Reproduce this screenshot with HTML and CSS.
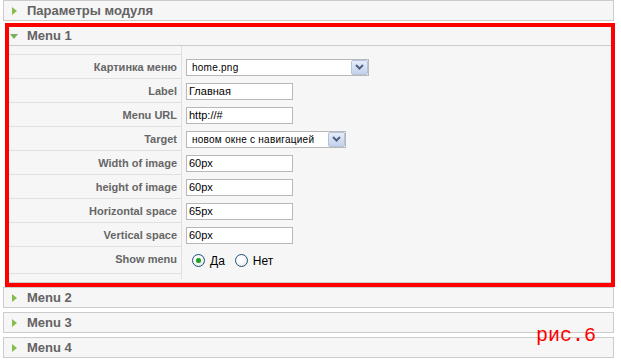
FILE: index.html
```html
<!DOCTYPE html>
<html lang="ru">
<head>
    <meta charset="UTF-8">
    <meta name="viewport" content="width=device-width, initial-scale=1.0">
    <title>Параметры модуля</title>
    <link rel="stylesheet" href="styles.css">
</head>
<body>
    <div class="params">
        <div class="panel">
            <h3 class="panel__title">Параметры модуля</h3>
        </div>

        <div class="panel panel--open">
            <h3 class="panel__title">Menu 1</h3>
            <div class="paramlist">
                <div class="paramlist__key paramlist__key--gap"></div>
                <div></div>

                <div class="paramlist__key">Картинка меню</div>
                <div class="paramlist__value">
                    <div class="select select--wide">
                        <span class="select__text">home.png</span>
                        <span class="select__arrow">
                            <svg width="9" height="6" viewBox="0 0 9 6"><path d="M1 1l3.5 3.5L8 1" fill="none" stroke="#4d6185" stroke-width="2"/></svg>
                        </span>
                    </div>
                </div>

                <div class="paramlist__key">Label</div>
                <div class="paramlist__value"><input class="text" type="text" value="Главная"></div>

                <div class="paramlist__key">Menu URL</div>
                <div class="paramlist__value"><input class="text" type="text" value="http://#"></div>

                <div class="paramlist__key">Target</div>
                <div class="paramlist__value">
                    <div class="select">
                        <span class="select__text">новом окне с навигацией</span>
                        <span class="select__arrow">
                            <svg width="9" height="6" viewBox="0 0 9 6"><path d="M1 1l3.5 3.5L8 1" fill="none" stroke="#4d6185" stroke-width="2"/></svg>
                        </span>
                    </div>
                </div>

                <div class="paramlist__key">Width of image</div>
                <div class="paramlist__value"><input class="text" type="text" value="60px"></div>

                <div class="paramlist__key">height of image</div>
                <div class="paramlist__value"><input class="text" type="text" value="60px"></div>

                <div class="paramlist__key">Horizontal space</div>
                <div class="paramlist__value"><input class="text" type="text" value="65px"></div>

                <div class="paramlist__key">Vertical space</div>
                <div class="paramlist__value"><input class="text" type="text" value="60px"></div>

                <div class="paramlist__key paramlist__key--tall">Show menu</div>
                <div class="paramlist__value">
                    <div class="radios">
                        <span class="radio radio--checked"></span>
                        <span class="radios__label">Да</span>
                        <span class="radio"></span>
                        <span class="radios__label">Нет</span>
                    </div>
                </div>

                <div class="paramlist__key paramlist__key--end"></div>
                <div></div>
            </div>
        </div>

        <div class="panel">
            <h3 class="panel__title">Menu 2</h3>
        </div>
        <div class="panel">
            <h3 class="panel__title">Menu 3</h3>
        </div>
        <div class="panel">
            <h3 class="panel__title">Menu 4</h3>
        </div>

        <!-- annotation drawn over the screenshot -->
        <div class="mark"></div>
        <span class="note">рис.6</span>
    </div>
</body>
</html>
```

FILE: styles.css
```css
* {
    margin: 0;
    padding: 0;
    box-sizing: border-box;
}
body {
    background: #ffffff;
    font-family: "Liberation Sans", Arial, sans-serif;
    color: #666666;
}
.params {
    position: relative;
    width: 621px;
    height: 360px;
    padding-left: 3px;
}
.panel {
    width: 611px;
    border: 1px solid #cccccc;
    background: #f6f6f6;
    margin-bottom: 4px;
}
.panel__title {
    position: relative;
    height: 19px;
    line-height: 19px;
    padding-left: 23px;
    font-size: 13px;
    font-weight: bold;
    color: #636363;
}
.panel__title::before {
    content: "";
    position: absolute;
    left: 8px;
    top: 6px;
    border-left: 5px solid #84bd4c;
    border-top: 4px solid transparent;
    border-bottom: 4px solid transparent;
}
.panel--open .panel__title {
    border-bottom: 1px solid #cccccc;
    height: 20px;
}
.panel--open .panel__title::before {
    left: 6px;
    top: 8px;
    border-top: 5px solid #79b15a;
    border-left: 4.5px solid transparent;
    border-right: 4.5px solid transparent;
    border-bottom: 0;
}

/* parameter list */
.paramlist {
    display: grid;
    grid-template-columns: 178px 1fr;
    padding-bottom: 3px;
}
.paramlist__key {
    height: 24px;
    display: flex;
    align-items: center;
    justify-content: flex-end;
    padding-right: 4px;
    border-right: 1px solid #e0e0e0;
    border-bottom: 1px solid #e0e0e0;
    font-size: 11px;
    font-weight: bold;
    color: #666666;
}
.paramlist__key--gap {
    height: 9px;
}
.paramlist__key--tall {
    height: 27px;
    padding-bottom: 3px;
}
.paramlist__key--end {
    height: 5px;
    border-bottom: 0;
}
.paramlist__value {
    display: flex;
    align-items: center;
    padding-left: 4px;
}

.text {
    display: block;
    width: 107px;
    height: 17px;
    border: 1px solid #b8b8b8;
    background: #ffffff;
    padding: 0 2px;
    font-family: "Liberation Sans", Arial, sans-serif;
    font-size: 11px;
    color: #000000;
    outline: none;
}

.select {
    display: flex;
    align-items: center;
    width: 160px;
    height: 17px;
    border: 1px solid #b8b8b8;
    background: #ffffff;
    padding-left: 5px;
    font-size: 10px;
    color: #000000;
}
.select--wide {
    width: 183px;
}
.select__text {
    flex: 1;
    white-space: nowrap;
    overflow: hidden;
    letter-spacing: 0.25px;
}
.select__arrow {
    display: flex;
    align-items: center;
    justify-content: center;
    width: 17px;
    height: 15px;
    border: 1px solid #b3c3de;
    border-radius: 2px;
    background: linear-gradient(#e6edf9, #c3d1ea);
}

.radios {
    display: flex;
    align-items: center;
    padding-left: 6px;
    font-size: 12px;
    color: #000000;
}
.radio {
    position: relative;
    width: 13px;
    height: 13px;
    border: 1px solid #1c5180;
    border-radius: 50%;
    background: radial-gradient(circle at 40% 40%, #ffffff 30%, #dcdcd6);
}
.radio--checked::after {
    content: "";
    position: absolute;
    left: 3px;
    top: 3px;
    width: 5px;
    height: 5px;
    border-radius: 50%;
    background: #21a121;
    box-shadow: 0 0 1px #8ed88e;
}
.radios__label {
    margin-left: 5px;
    margin-right: 10px;
}

/* red annotation */
.mark {
    position: absolute;
    left: 5px;
    top: 23px;
    width: 610px;
    height: 264px;
    border: 4px solid #ff0000;
    box-shadow: -2px 0 0 #ffffff;
    pointer-events: none;
}
.note {
    position: absolute;
    left: 536px;
    top: 326px;
    font-family: "Liberation Mono", "Courier New", monospace;
    font-size: 20px;
    line-height: 20px;
    color: #ff0000;
}
```
